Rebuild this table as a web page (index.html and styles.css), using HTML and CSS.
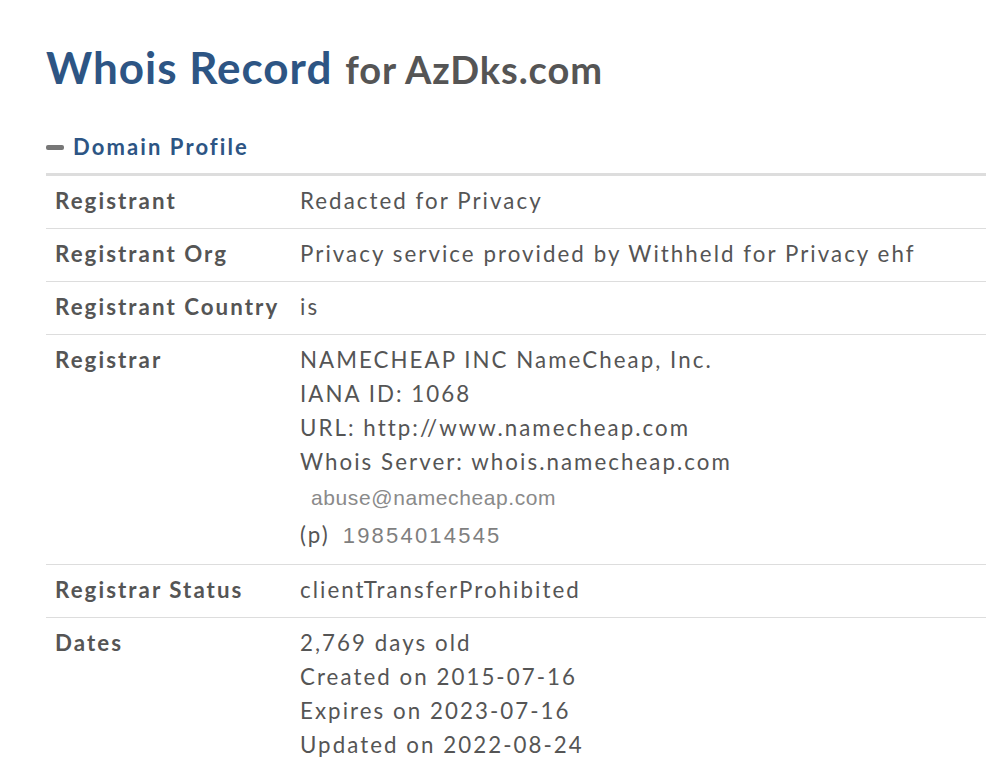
FILE: index.html
```html
<!DOCTYPE html>
<html>
<head>
<meta charset="utf-8">
<link rel="stylesheet" href="styles.css">
</head>
<body>
<div class="page">
  <h1 class="title"><span class="title-main">Whois Record</span> <span class="title-sub">for AzDks.com</span></h1>
  <h2 class="section"><span class="minus"></span>Domain Profile</h2>
  <table class="whois">
    <colgroup><col class="col-label"><col class="col-value"></colgroup>
    <tr><td class="label">Registrant</td><td class="value">Redacted for Privacy</td></tr>
    <tr><td class="label">Registrant Org</td><td class="value">Privacy service provided by Withheld for Privacy ehf</td></tr>
    <tr><td class="label">Registrant Country</td><td class="value">is</td></tr>
    <tr><td class="label">Registrar</td><td class="value">
      <div>NAMECHEAP INC NameCheap, Inc.</div>
      <div>IANA ID: 1068</div>
      <div>URL: http://www.namecheap.com</div>
      <div>Whois Server: whois.namecheap.com</div>
      <div class="img-line email-line"><span class="img-text email">abuse@namecheap.com</span></div>
      <div class="img-line phone-line">(p)<span class="img-text phone">19854014545</span></div>
    </td></tr>
    <tr><td class="label">Registrar Status</td><td class="value">clientTransferProhibited</td></tr>
    <tr><td class="label">Dates</td><td class="value">
      <div>2,769 days old</div>
      <div>Created on 2015-07-16</div>
      <div>Expires on 2023-07-16</div>
      <div>Updated on 2022-08-24</div>
    </td></tr>
  </table>
</div>
</body>
</html>
```
FILE: styles.css
```css
html, body { margin: 0; padding: 0; background: #fff; }
body { font-family: Lato, "Open Sans", sans-serif; }
.page { padding: 39px 0 0 46px; }
.title { margin: 0; font-weight: 700; line-height: 56px; white-space: nowrap; }
.title-main { font-size: 44px; letter-spacing: 1px; color: #2d5584; }
.title-sub { font-size: 38px; letter-spacing: 0.9px; color: #555; margin-left: 5px; }
.section { margin: 33px 0 12px; font-size: 22px; letter-spacing: 2.1px; font-weight: 700; color: #2d5584; display: flex; align-items: center; line-height: 28px; }
.minus { display: inline-block; width: 18px; height: 5px; border-radius: 2px; background: #777; margin-right: 9px; }
.whois { border-collapse: collapse; table-layout: fixed; width: 940px; border-top: 3px solid #ddd; font-size: 22.3px; letter-spacing: 2.05px; }
.col-label { width: 254px; }
.whois td { border-bottom: 1px solid #ddd; padding: 8px 0 10px; line-height: 34px; vertical-align: top; }
.whois td.label { padding-left: 9px; font-weight: 700; color: #555; }
.value { color: #555; white-space: nowrap; }
.email-line { line-height: 36px; }
.phone-line { line-height: 37px; }
.img-text { font-family: "Liberation Sans", Arial, sans-serif; color: #8a8a8a; }
.email { font-size: 21px; letter-spacing: 0.6px; margin-left: 11px; }
.phone { font-size: 22px; letter-spacing: 2.2px; margin-left: 13px; color: #7f7f7f; }
```
